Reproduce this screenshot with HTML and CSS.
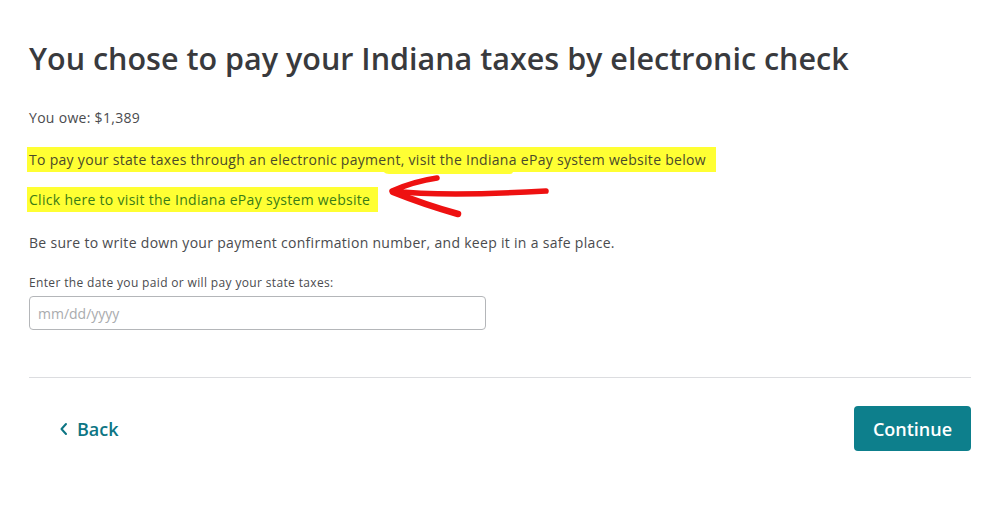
FILE: index.html
```html
<!DOCTYPE html>
<html>
<head>
<meta charset="utf-8">
<link rel="stylesheet" href="styles.css">
</head>
<body>
<main class="page">
  <h1 class="title">You chose to pay your Indiana taxes by electronic check</h1>
  <p class="owe">You owe: $1,389</p>
  <p class="hl-line"><span class="hl hl-wide">To pay your state taxes through an electronic payment, visit the Indiana ePay system website below</span><span class="hl-blob"></span></p>
  <p class="hl-line link-line"><a class="hl link" href="#">Click here to visit the Indiana ePay system website</a>
    <svg class="arrow" width="170" height="50" viewBox="0 0 170 50">
      <path d="M49 4 C35 6 20 10 4 17 C30 20 70 22 158 17" fill="none" stroke="#ee1111" stroke-width="5.5" stroke-linecap="round" stroke-linejoin="round"/>
      <path d="M5 18 C25 26 45 33 70 40" fill="none" stroke="#ee1111" stroke-width="6.5" stroke-linecap="round"/>
    </svg>
  </p>
  <p class="note">Be sure to write down your payment confirmation number, and keep it in a safe place.</p>
  <label class="label" for="d">Enter the date you paid or will pay your state taxes:</label>
  <input id="d" class="date" type="text" placeholder="mm/dd/yyyy">
  <hr class="rule">
  <div class="actions">
    <a class="back" href="#"><svg width="10" height="14" viewBox="0 0 10 14"><path d="M7 2 L2.5 7 L7 12" fill="none" stroke="#0d7584" stroke-width="2" stroke-linecap="round" stroke-linejoin="round"/></svg>Back</a>
    <button class="continue">Continue</button>
  </div>
</main>
</body>
</html>
```
FILE: styles.css
```css
* { box-sizing: border-box; }
body {
  margin: 0;
  background: #fff;
  font-family: "Open Sans", Lato, sans-serif;
  color: #393a3d;
}
.page {
  width: 942px;
  margin-left: 29px;
  padding-top: 36px;
}
.title {
  margin: 0;
  font-size: 30.5px;
  font-weight: 600;
  line-height: 44px;
  color: #393a3d;
}
.owe {
  margin: 28px 0 0;
  font-size: 14px;
  line-height: 20px;
  letter-spacing: 0.3px;
  color: #4a4b4e;
}
.hl-line {
  position: relative;
  margin: 22px 0 0;
  font-size: 14px;
  line-height: 20px;
  letter-spacing: 0.3px;
}
.hl {
  background: #ffff33;
  padding: 3px 10px 3px 2px;
  margin-left: -2px;
}
.hl-wide { color: #4a4a2a; }
.hl-blob {
  position: absolute;
  left: 352px;
  top: 16px;
  width: 132px;
  height: 8px;
  background: #ffff33;
  border-radius: 0 0 3px 8px;
  z-index: -1;
}
.link-line { margin-top: 20px; }
.link {
  color: #3a7c16;
  text-decoration: none;
  padding-right: 8px;
}
.arrow {
  position: absolute;
  left: 359px;
  top: -16px;
}
.note {
  margin: 23px 0 0;
  font-size: 14px;
  line-height: 20px;
  letter-spacing: 0.3px;
  color: #4a4b4e;
}
.label {
  display: block;
  margin-top: 22px;
  font-size: 12px;
  line-height: 16px;
  letter-spacing: 0.35px;
  color: #4a4b4e;
}
.date {
  display: block;
  margin-top: 5px;
  width: 457px;
  height: 34px;
  border: 1px solid #b4b6b9;
  border-radius: 4px;
  padding: 0 8px;
  font-family: inherit;
  font-size: 14px;
  color: #393a3d;
}
.date::placeholder { color: #a9abae; }
.rule {
  margin: 47px 0 0;
  border: 0;
  border-top: 1px solid #dcdde0;
}
.actions {
  display: flex;
  justify-content: space-between;
  align-items: center;
  margin-top: 28px;
}
.back {
  display: flex;
  align-items: center;
  gap: 8px;
  margin-left: 30px;
  font-size: 18px;
  font-weight: 600;
  color: #0d7584;
  text-decoration: none;
}
.continue {
  width: 117px;
  height: 45px;
  border: 0;
  border-radius: 4px;
  background: #0d7f8c;
  color: #fff;
  font-family: inherit;
  font-size: 18px;
  font-weight: 600;
}
```
